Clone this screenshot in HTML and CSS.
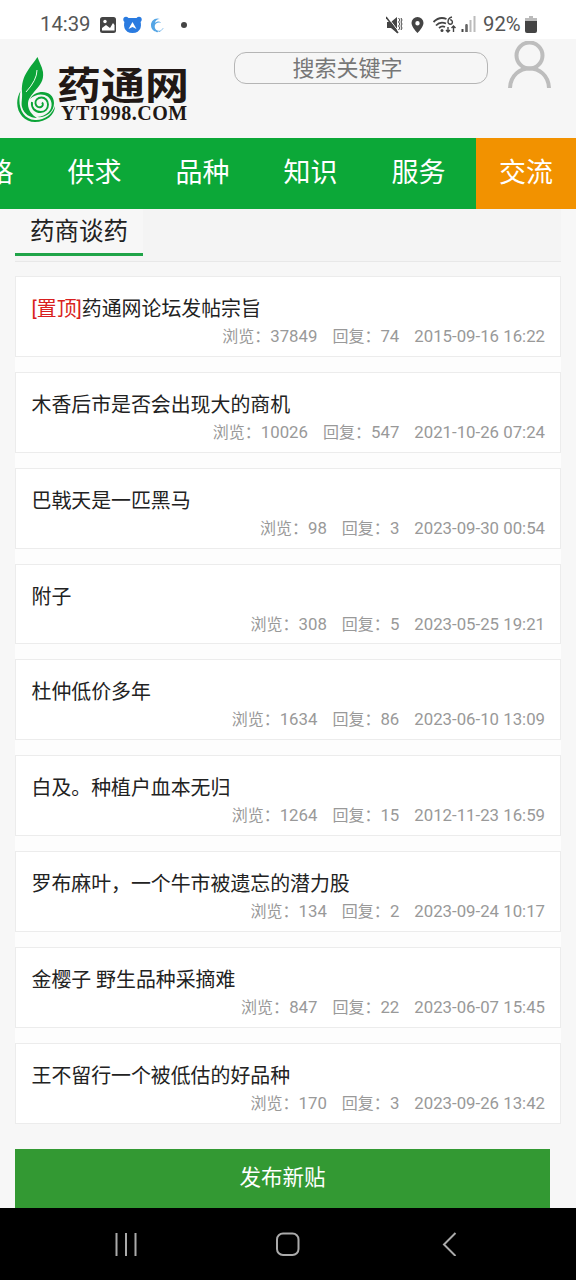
FILE: index.html
```html
<!DOCTYPE html>
<html lang="zh-CN">
<head>
<meta charset="utf-8">
<title>药通网</title>
<link rel="stylesheet" href="styles.css">
</head>
<body>
<div class="screen">
  <div class="status">
    <span class="clock">14:39</span>
    <svg class="status-left" width="92" height="20" viewBox="0 0 92 20">
      <rect x="1" y="2" width="16" height="16" rx="2.500" fill="#444"/>
      <path d="M3 13l4-3 4 3 3-5 1.500 2v5.500H3z" fill="#fff"/><circle cx="6" cy="6.500" r="1.700" fill="#fff"/>
      <circle cx="27" cy="4.500" r="2.700" fill="#2a7be0"/><circle cx="40" cy="4.500" r="2.700" fill="#2a7be0"/>
      <path d="M27 3h13c4 7 2 15-6.500 15S23 10 27 3z" fill="#2a7be0"/><path d="M33.500 7l4 7-4-2-4 2z" fill="#fff"/>
      <path d="M61 4c-5-2-9 2-9 6 0 5 4 8 9 6-4 0-6-3-5-6 1-2 3-3 6-2-1-2-4-2-6 0 0-2 2-4 5-4z" fill="#54a5e5"/>
      <path d="M57 16.500q4 1 7-3" fill="none" stroke="#54a5e5" stroke-dasharray="2 1"/>
      <circle cx="85" cy="10" r="3" fill="#444"/>
    </svg>
    <svg class="status-right" width="94" height="22" viewBox="0 0 94 22">
      <g fill="#444">
        <path d="M1 8h4l6-5v16l-6-5H1z"/>
        <path d="M31.500 3a6 6 0 0 0-6 6c0 4 6 10 6 10s6-6 6-10a6 6 0 0 0-6-6zm0 4a2.200 2.200 0 1 1 0 4.400 2.200 2.200 0 0 1 0-4.400z" fill-rule="evenodd"/>
        <rect x="75.500" y="15" width="2" height="3"/><rect x="79.500" y="11" width="2" height="7"/>
      </g>
      <path d="M1 2l12 16" stroke="#fff" stroke-width="1"/><path d="M0 3l12 16" stroke="#444" stroke-width="1.500"/>
      <path d="M12.500 4l1.500 2-1.500 2 1.500 2-1.500 2 1.500 2-1.500 2M15 4l1 2-1 2 1 2-1 2 1 2-1 2" fill="none" stroke="#444" stroke-width="1"/>
      <path d="M47.500 8q6-6 13-3M50 11.500q4-4.500 10-2M53 14q3-2.500 6-1" fill="none" stroke="#444" stroke-width="1.800"/><circle cx="56" cy="16.500" r="1.500" fill="#444"/>
      <path d="M66 3Q62 4 62 8a2.200 2.200 0 1 0 2.200-2.200M62 13v5m-2-2 2 2 2-2M67.500 18v-6m-2 2 2-2 2 2" fill="none" stroke="#444" stroke-width="1.400"/>
      <path d="M80.500 10v8" stroke="#666" stroke-width="2"/><path d="M84.500 6v12M88.500 2v16" stroke="#bbb" stroke-width="2"/>
    </svg>
    <span class="percent">92%</span>
    <svg class="battery" width="12" height="18" viewBox="0 0 12 18"><path d="M4 0h4v2h4v4H0V2h4z" fill="#bbb"/><path d="M0 5h12v10q0 2-2 2H2q-2 0-2-2z" fill="#444"/></svg>
  </div>

  <header class="header">
    <div class="logo">
      <svg class="leaf" width="42" height="68" viewBox="0 0 42 68">
        <path d="M20.500 1C14 11 4 19 5 36c.500 7-1 11 0 15 2 7 8 11 15 11-5-3-9-8-9-14 0-5 3-8 6-12C23 29 27 25 26 16 25 10 22 6 20.500 1z" fill="#0ca438"/>
        <path d="M20 14Q20 24 9 36" stroke="#eaffea" stroke-width="1" fill="none"/>
        <path d="M3.500 35C-5 50 4 66 18 66c11 0 20-7 20-16-3 9-11 14.500-20 14C5 63 0 50 3.500 35z" fill="#0ca438"/>
        <path d="M13 43C18 33 37 33 37 47 37 57 28 62 20 61 30 60 35.500 54 34.500 47 33 37 20 36 13 43z" fill="#0ca438"/>
        <path d="M15 46c-1 6 3 10 8.500 10 4.500 0 7.500-3 7.500-7.500 0-4-3-7-6.500-7-4 0-6.500 3-6 6 .5 3 3 4.500 5.500 3.500 2-.8 2.500-3 1-4.500" fill="none" stroke="#0ca438" stroke-width="1.900"/>
      </svg>
      <div class="brand"><span class="brand-cn">药通网</span><span class="brand-en">YT1998.COM</span></div>
    </div>
    <input class="search" type="text" placeholder="搜索关键字">
    <svg class="user" width="44" height="50" viewBox="0 0 44 50" fill="none" stroke="#bdbdbd" stroke-width="4"><circle cx="21.500" cy="14.500" r="13"/><path d="M2 47C3 21 40 21 41 47"/></svg>
  </header>

  <nav class="nav">
    <a class="tab">价格</a><a class="tab">供求</a><a class="tab">品种</a><a class="tab">知识</a><a class="tab">服务</a><a class="tab active">交流</a>
  </nav>

  <main class="main">
    <div class="heading"><h1 class="title">药商谈药</h1></div>
    <div class="posts">
      <article class="post"><h2 class="subject"><span class="pin">[置顶]</span>药通网论坛发帖宗旨</h2><p class="meta"><span>浏览：<span class="num">37849</span></span><span>回复：<span class="num">74</span></span><time class="num">2015-09-16 16:22</time></p></article>
      <article class="post"><h2 class="subject">木香后市是否会出现大的商机</h2><p class="meta"><span>浏览：<span class="num">10026</span></span><span>回复：<span class="num">547</span></span><time class="num">2021-10-26 07:24</time></p></article>
      <article class="post"><h2 class="subject">巴戟天是一匹黑马</h2><p class="meta"><span>浏览：<span class="num">98</span></span><span>回复：<span class="num">3</span></span><time class="num">2023-09-30 00:54</time></p></article>
      <article class="post"><h2 class="subject">附子</h2><p class="meta"><span>浏览：<span class="num">308</span></span><span>回复：<span class="num">5</span></span><time class="num">2023-05-25 19:21</time></p></article>
      <article class="post"><h2 class="subject">杜仲低价多年</h2><p class="meta"><span>浏览：<span class="num">1634</span></span><span>回复：<span class="num">86</span></span><time class="num">2023-06-10 13:09</time></p></article>
      <article class="post"><h2 class="subject">白及。种植户血本无归</h2><p class="meta"><span>浏览：<span class="num">1264</span></span><span>回复：<span class="num">15</span></span><time class="num">2012-11-23 16:59</time></p></article>
      <article class="post"><h2 class="subject">罗布麻叶，一个牛市被遗忘的潜力股</h2><p class="meta"><span>浏览：<span class="num">134</span></span><span>回复：<span class="num">2</span></span><time class="num">2023-09-24 10:17</time></p></article>
      <article class="post"><h2 class="subject">金樱子 野生品种采摘难</h2><p class="meta"><span>浏览：<span class="num">847</span></span><span>回复：<span class="num">22</span></span><time class="num">2023-06-07 15:45</time></p></article>
      <article class="post"><h2 class="subject">王不留行一个被低估的好品种</h2><p class="meta"><span>浏览：<span class="num">170</span></span><span>回复：<span class="num">3</span></span><time class="num">2023-09-26 13:42</time></p></article>
    </div>
    <button class="publish">发布新贴</button>
  </main>

  <footer class="system">
    <svg width="24" height="24" viewBox="0 0 24 24" stroke="#aaa" stroke-width="2"><path d="M2.500 1v23M12 1v23M21.500 1v23"/></svg>
    <svg width="24" height="24" viewBox="0 0 24 24" fill="none" stroke="#aaa" stroke-width="2"><rect x="1" y="1.500" width="21.500" height="21.500" rx="6"/></svg>
    <svg width="24" height="24" viewBox="0 0 24 24" fill="none" stroke="#aaa" stroke-width="2"><path d="M17.500 1L6 12.500 17.500 24"/></svg>
  </footer>
</div>
</body>
</html>
```
FILE: styles.css
```css
* { box-sizing: border-box; }
body { margin: 0; background: #f7f7f7; color: #222; font-family: Roboto, "Noto Sans CJK SC", sans-serif; }
h1, h2, p { margin: 0; font-weight: 400; }
svg { display: block; flex: none; }
.screen { width: 576px; height: 1280px; display: flex; flex-direction: column; overflow: hidden; }
.status { height: 39px; flex: none; padding: 10px 0 0 40px; background: #fff; display: flex; align-items: flex-start; color: #555; font-size: 20.300px; line-height: 29px; }
.clock { width: 59px; }
.status-left { margin-top: 5px; }
.status-right { margin: 4px 0 0 195px; }
.percent { margin-left: 3px; width: 42px; }
.battery { margin-top: 6px; }
.header { height: 99px; flex: none; padding: 2px 24px 0 17px; display: flex; align-items: flex-start; background: #f6f6f6; }
.logo { display: flex; width: 217px; padding-top: 15px; }
.brand { display: flex; flex-direction: column; width: 134px; padding-top: 9px; margin-left: -2px; color: #211815; }
.brand-cn { height: 38px; font: 700 44px/42px "Noto Sans CJK SC", sans-serif; white-space: nowrap; transform: scaleY(.86); transform-origin: top; }
.brand-en { font: 700 20px/20px "Liberation Serif", serif; letter-spacing: .5px; padding-left: 4px; }
.search { width: 254px; height: 32px; margin-top: 11px; padding: 0 27px 4px 0; border: 1px solid #b5b5b5; border-radius: 12px; background: transparent; text-align: center; font: 22px/26px "Noto Sans CJK SC", sans-serif; }
.search::placeholder { color: #777; }
.user { margin-left: 20px; }
.nav { height: 71px; flex: none; display: flex; justify-content: flex-end; background: #0ca838; overflow: hidden; }
.tab { flex: none; width: 108px; padding-right: 7px; text-align: center; color: #fff; font-size: 27px; line-height: 71px; }
.tab.active { width: 100px; background: #f29200; padding: 0; }
.main { flex: 1; min-height: 0; padding: 0 15px; display: flex; flex-direction: column; overflow: hidden; }
.heading { height: 53px; flex: none; background: #f4f4f4; border-bottom: 1px solid #e8e8e8; }
.title { width: 128px; height: 47px; border-bottom: 3px solid #20a448; background: #f7f7f7; padding-left: 15px; font-size: 24.500px; line-height: 45px; white-space: nowrap; }
.posts { flex: none; margin-top: 14px; display: flex; flex-direction: column; gap: 15px; background: #fdfdfd; }
.post { height: 80.850px; border: 1px solid #ececec; background: #fff; padding: 15px 15px 0; }
.subject { height: 32px; padding-left: .5px; font-size: 19.900px; line-height: 36px; white-space: nowrap; }
.pin { color: #d91f20; }
.meta { display: flex; justify-content: flex-end; gap: 15px; color: #999; font-size: 16px; line-height: 25px; white-space: nowrap; }
.num { font-size: 16.800px; }
.publish { flex: none; width: 535px; height: 60px; margin-top: 25px; padding: 0 0 5px; border: 0; background: #339933; color: #fff; font: 21.500px/54px "Noto Sans CJK SC", sans-serif; }
.system { height: 72px; flex: none; display: flex; justify-content: space-between; padding: 24px 114px 0 114px; background: #000; }
```
